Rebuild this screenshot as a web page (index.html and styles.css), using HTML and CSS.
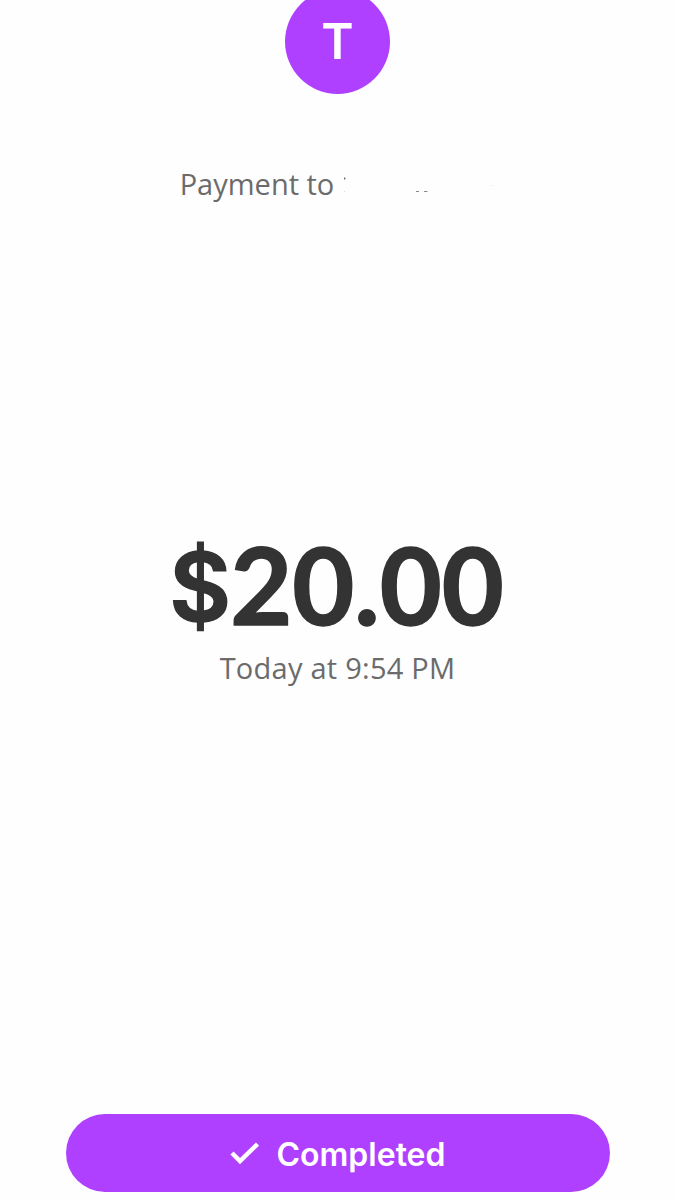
FILE: index.html
```html
<!DOCTYPE html>
<html lang="en">
<head>
<meta charset="utf-8">
<title>Payment</title>
<link rel="stylesheet" href="styles.css">
</head>
<body>
<main class="receipt">
  <div class="avatar">T</div>
  <div class="recipient">
    <span class="recipient-label">Payment to</span>
    <svg class="recipient-marks" width="156" height="24" viewBox="0 0 156 24" aria-hidden="true">
      <path d="M5 5l2 1.500-2 1.500z" fill="#777"/>
      <path d="M5 19h1v1H5zM153 13h1v1h-1z" fill="#ddd"/>
      <path d="M77 19.500h3M85 19.500h3.500" stroke="#888"/>
    </svg>
  </div>
  <div class="amount"><span class="currency">$</span>20.00</div>
  <div class="time">Today at 9:54 PM</div>
  <button class="status" type="button">
    <svg class="check" width="30" height="24" viewBox="0 0 30 24" aria-hidden="true">
      <path d="M3 12l8 8L28.500 3" fill="none" stroke="#fff" stroke-width="4.500"/>
    </svg>
    <span class="status-label">Completed</span>
  </button>
</main>
</body>
</html>
```
FILE: styles.css
```css
body {
  margin: 0;
  background: #fefefe;
}
.receipt {
  height: 1200px;
  display: flex;
  flex-direction: column;
  align-items: center;
  overflow: hidden;
  white-space: nowrap;
}
.avatar {
  flex: none;
  width: 105px;
  height: 105px;
  margin-top: -11px;
  border-radius: 50%;
  background: #b040ff;
  color: #fff;
  font: 600 49px/106px Inter, sans-serif;
  text-align: center;
}
.recipient {
  display: flex;
  align-items: center;
  gap: 5px;
  height: 40px;
  margin-top: 70px;
  color: #6b6b6b;
}
.recipient-label,
.time {
  font: 400 29px/40px "Open Sans", sans-serif;
}
.amount {
  display: flex;
  align-items: flex-start;
  height: 100px;
  margin-top: 330px;
  color: #333;
  font: 700 107px/100px Lato, sans-serif;
  -webkit-text-stroke: 1.500px #333;
}
.currency {
  width: 61px;
  margin-left: -2px;
  font: 600 95px/106px Inter, sans-serif;
}
.time {
  height: 40px;
  margin-top: 14px;
  color: #6b6b6b;
  letter-spacing: 0.25px;
}
.status {
  display: flex;
  align-items: center;
  justify-content: center;
  gap: 17px;
  width: 544px;
  height: 78px;
  margin-top: 426px;
  padding: 0;
  border: 0;
  border-radius: 39px;
  background: #b040ff;
  color: #fff;
}
.status-label {
  padding-top: 3px;
  font: 600 32px/40px Inter, sans-serif;
}
```
